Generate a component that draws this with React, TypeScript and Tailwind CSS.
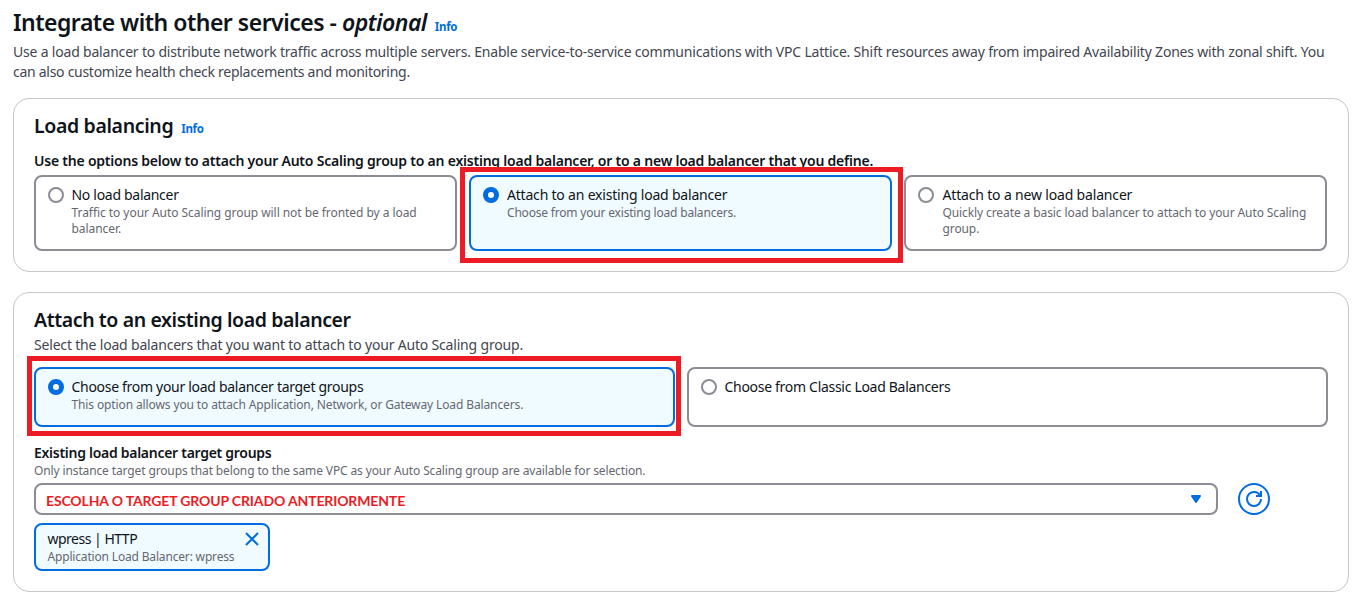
import type { ReactNode } from "react";

function Radio({ checked }: { checked?: boolean }) {
  return (
    <span
      className={
        checked
          ? "mt-0.5 size-4 shrink-0 rounded-full border-[5px] border-[#006ce0] bg-white"
          : "mt-0.5 size-4 shrink-0 rounded-full border-2 border-[#8c8c94] bg-white"
      }
    />
  );
}

type TileProps = {
  label: ReactNode;
  description?: ReactNode;
  checked?: boolean;
  size: string;
  children?: ReactNode;
};

function Tile({ label, description, checked, size, children }: TileProps) {
  return (
    <div
      className={`relative flex rounded-lg border-2 px-3 py-2 ${size} ${
        checked ? "border-[#006ce0] bg-[#f0fbff]" : "border-[#8c8c94] bg-white"
      }`}
    >
      <Radio checked={checked} />
      <div className="min-w-0 whitespace-nowrap">
        <div className="text-sm leading-5">{label}</div>
        <div className="text-xs leading-4 text-[#656871]">{description}</div>
      </div>
      {children}
    </div>
  );
}

export default function App() {
  return (
    <main className="h-[602px] w-[1367px] overflow-hidden bg-white pt-2 pl-[13px] font-['Noto_Sans',sans-serif] text-[#0f141a]">
      <header className="whitespace-nowrap">
        <div className="flex h-[34px] items-baseline">
          <h1 className="text-[23px] leading-[28px] font-semibold">
            <span className="tracking-[-0.5px]">Integrate with other services - </span>
            <i className="tracking-[-0.5px]">optional</i>
          </h1>
          <a className="ml-2 text-[11.5px] leading-4 font-bold tracking-[-0.3px] text-[#006ce0]">Info</a>
        </div>
        <p className="text-sm leading-5 text-[#424650]">
          <span className="tracking-[-0.195px]">
            Use a load balancer to distribute network traffic across multiple servers. Enable service-to-service communications with VPC Lattice. Shift resources away from impaired Availability Zones with zonal shift. You
          </span>
          <br />
          <span className="tracking-[-0.28px]">can also customize health check replacements and monitoring.</span>
        </p>
      </header>

      <section className="mt-4 h-[174px] w-[1336px] rounded-2xl border border-[#c6c6cd] px-5 pt-[15px] whitespace-nowrap">
        <div className="flex h-[37px] items-baseline">
          <h2 className="text-[19.5px] leading-6 font-semibold tracking-[-0.36px]">Load balancing</h2>
          <a className="ml-2 text-[11.5px] leading-4 font-bold tracking-[-0.3px] text-[#006ce0]">Info</a>
        </div>
        <p className="mb-1 text-sm leading-5 font-semibold tracking-[-0.22px]">
          Use the options below to attach your Auto Scaling group to an existing load balancer, or to a new load balancer that you define.
        </p>
        <div className="grid grid-cols-[423px_423px_423px] gap-3">
          <Tile
            size="h-[76px] gap-[7.5px]"
            label={<span className="tracking-[-0.3px]">No load balancer</span>}
            description={<span className="tracking-[-0.055px]">Traffic to your Auto Scaling group will not be fronted by a load<br />balancer.</span>}
          />
          <Tile
            size="h-[76px] gap-2"
            checked
            label={<span className="tracking-[-0.2px]">Attach to an existing load balancer</span>}
            description={<span className="tracking-[-0.19px]">Choose from your existing load balancers.</span>}
          >
            <div className="absolute -top-[10px] -right-[13px] -bottom-[14px] -left-[11px] border-[5px] border-[#ed1c24]" />
          </Tile>
          <Tile
            size="h-[76px] gap-[8.5px]"
            label={<span className="tracking-[-0.17px]">Attach to a new load balancer</span>}
            description={<span className="tracking-[-0.1px]">Quickly create a basic load balancer to attach to your Auto Scaling<br />group.</span>}
          />
        </div>
      </section>

      <section className="mt-5 h-[300px] w-[1336px] rounded-2xl border border-[#c6c6cd] px-5 pt-[15px] whitespace-nowrap">
        <h2 className="text-[19.5px] leading-6 font-semibold tracking-[-0.4px]">Attach to an existing load balancer</h2>
        <p className="mt-[3px] text-sm leading-5 tracking-[-0.185px] text-[#424650]">
          Select the load balancers that you want to attach to your Auto Scaling group.
        </p>
        <div className="mt-3 grid grid-cols-2 gap-3">
          <Tile
            size="h-[60px] gap-[7.5px]"
            checked
            label={<span className="tracking-[-0.3px]">Choose from your load balancer target groups</span>}
            description={<span className="tracking-[-0.12px]">This option allows you to attach Application, Network, or Gateway Load Balancers.</span>}
          >
            <div className="absolute -top-[13px] -right-[8px] -bottom-[11px] -left-[9px] border-[5px] border-[#ed1c24]" />
          </Tile>
          <Tile size="h-[60px] gap-[7.5px]" label={<span className="tracking-[-0.3px]">Choose from Classic Load Balancers</span>} />
        </div>
        <h3 className="mt-4 text-sm leading-5 font-semibold tracking-[-0.28px]">Existing load balancer target groups</h3>
        <p className="text-xs leading-4 tracking-[-0.125px] text-[#656871]">
          Only instance target groups that belong to the same VPC as your Auto Scaling group are available for selection.
        </p>
        <div className="mt-1 flex gap-5">
          <div className="flex h-8 w-[1184px] items-center justify-between rounded-lg border-2 border-[#8c8c94] pr-3 pl-[10px]">
            <span className="pt-[3px] font-['Lato',sans-serif] text-sm leading-5 font-bold tracking-[-0.14px] text-[#ed1c24]">
              ESCOLHA O TARGET GROUP CRIADO ANTERIORMENTE
            </span>
            <svg className="size-4" viewBox="0 0 16 16">
              <path d="M4 5h8l-4 6z" fill="#006ce0" stroke="#006ce0" strokeWidth="2" strokeLinejoin="round" />
            </svg>
          </div>
          <button className="flex size-8 items-center justify-center rounded-full border-2 border-[#006ce0]">
            <svg className="size-4" viewBox="0 0 16 16" fill="none" stroke="#006ce0" strokeWidth="2">
              <path d="M10 5h5V0" />
              <path d="M15 8a6.957 6.957 0 0 1-7 7 6.957 6.957 0 0 1-7-7 6.957 6.957 0 0 1 7-7 6.870 6.870 0 0 1 6.300 4" />
            </svg>
          </button>
        </div>
        <div className="mt-2 flex h-12 w-[236px] justify-between rounded-lg border-2 border-[#006ce0] bg-[#f0fbff] pt-1 pr-2 pl-[11.5px]">
          <div>
            <div className="text-sm leading-5 tracking-[-0.5px]">wpress | HTTP</div>
            <div className="text-xs leading-4 tracking-[-0.17px] text-[#656871]">Application Load Balancer: wpress</div>
          </div>
          <svg className="mt-0.5 size-4 shrink-0" viewBox="0 0 16 16" stroke="#006ce0" strokeWidth="2">
            <path d="m2 2 12 12M14 2 2 14" />
          </svg>
        </div>
      </section>
    </main>
  );
}
